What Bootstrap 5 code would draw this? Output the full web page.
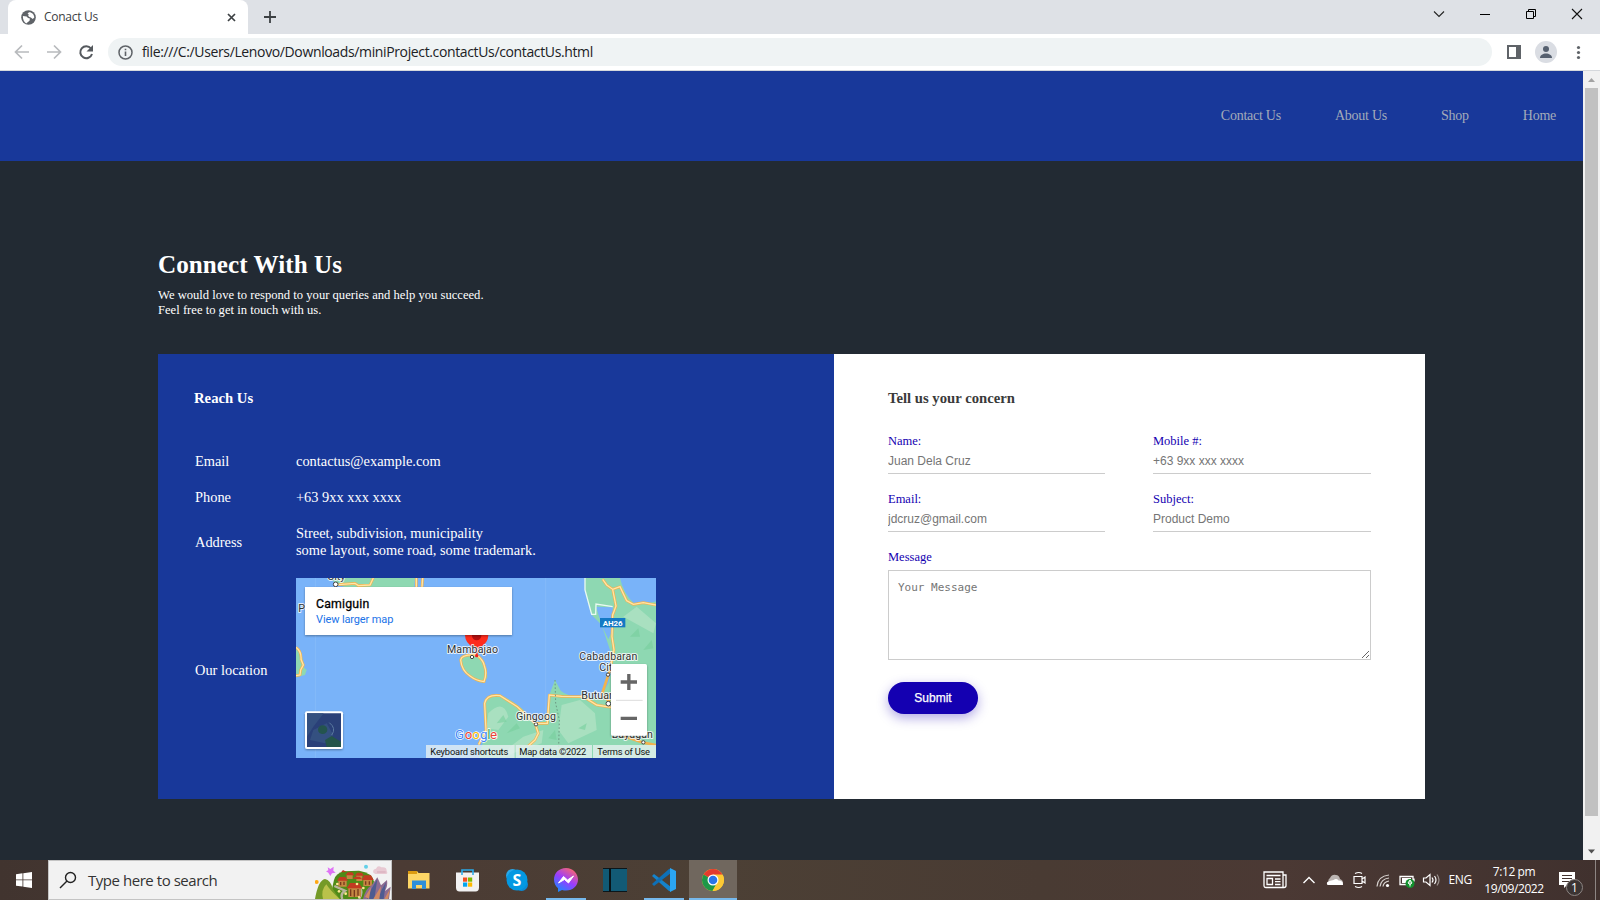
<!DOCTYPE html>
<html lang="en">
<head>
<meta charset="utf-8">
<title>Conact Us</title>
<link href="https://cdn.jsdelivr.net/npm/bootstrap@5.3.0/dist/css/bootstrap.min.css" rel="stylesheet">
<style>
body{width:1600px;height:900px;overflow:hidden;font-family:"Open Sans","Noto Sans",sans-serif;background:#222a33}
svg{display:block;flex:none}
.tabstrip{height:34px;background:#dee1e6}
.tab-active{width:240px;height:34px;margin-left:8px;background:#fff;border-radius:8px 8px 0 0;padding:0 12px 0 13px;font-size:12px;color:#3c4043}
.tab-title{letter-spacing:-.28px}
.newtab{margin:11px 0 0 16px}
.winctl{width:46px;height:28px}
.toolbar{height:37px;background:#fff;border-bottom:1px solid #d5d8dc;color:#202124}
.omnibox{width:1384px;height:28px;border-radius:14px;background:#eff3f4;padding-left:10px;font-size:14px}
.url-text{letter-spacing:-.365px;margin:0 0 1px 9px}
.viewport{height:789px}
.site{font-family:"Liberation Serif",serif;background:#222a33;width:1583px}
.site-nav{height:90px;background:#18389a;padding:0 27px 2px 0;gap:54px;font-size:14px;letter-spacing:-.25px}
.site-nav a{color:#a3abb9;text-decoration:none}
.site-main{padding:86px 158px 0}
.site h1{font-size:25.1px;line-height:30px;font-weight:700;color:#fff;margin:3px 0 0;letter-spacing:.06px}
.intro{font-size:12.6px;line-height:15px;color:#fff;margin:8px 0 36px;letter-spacing:.01px}
.panels{height:445px;width:1267px}
.reach{width:676px;background:#18389a;color:#fff;padding:34px 36px}
.concern{background:#fff;flex:1;padding:34px 54px}
.site h2{font-size:14.7px;line-height:20px;font-weight:700;margin:0}
.concern h2{color:#3a3a3a}
.facts{display:grid;grid-template-columns:101px 360px;font-size:14.4px;line-height:17px;row-gap:19px;align-items:center;margin:45px 0 0 1px}
.mapbox{width:360px;height:180px}
.fieldgrid{display:grid;grid-template-columns:217px 218px;column-gap:48px;row-gap:18px;margin-top:26px}
.concern label{display:block;font-size:12.5px;line-height:15px;color:#1400b1;margin-bottom:4px}
.concern label.msg-label{margin:18px 0 5px}
.concern input{display:block;width:100%;height:21px;border:0;border-bottom:1px solid #ccc;padding:0 0 5px;font:12px/15px "Liberation Sans",sans-serif;border-radius:0}
.concern ::placeholder{color:#757575;opacity:1}
.concern textarea{display:block;width:483px;height:90px;border:1px solid #ccc;padding:10px 9px;font:11px/13px "DejaVu Sans Mono",monospace;resize:both}
.send{width:90px;height:32px;border-radius:16px;background:#1400b1;color:#fff;border:0;font:12px "Liberation Sans",sans-serif;-webkit-text-stroke:.25px #fff;box-shadow:0 4px 12px rgba(60,40,190,.4);margin-top:22px}
.scrollrail{width:17px;background:#f1f1f1}
.thumb{width:13px;height:728px;background:#c1c1c1}
.taskbar{height:40px;background:linear-gradient(90deg,#41342f 0,#4b3b34 25%,#4c4035 45%,#493b33 65%,#4b3934 80%,#40312e 100%);color:#fff}
.startbtn{width:48px;height:40px}
.searchbox{width:344px;height:40px;background:#f2f2f2;border:1px solid #c4c4c4;padding-left:10px;color:#333;font-size:15px;margin-right:3px}
.search-text{letter-spacing:-.46px;margin-left:11px}
.app{width:48px;height:40px;margin-right:1px;padding-top:2px;border-bottom:2px solid transparent}
.app-run{width:40px;margin:0 5px 0 4px;border-color:#76b9ed}
.app-front{background:#70675e;border-color:#76b9ed}
.trayicon{width:24px;height:24px}
.lang{font-size:12px;letter-spacing:-.3px;margin-left:6px;width:21px;white-space:nowrap}
.clock{width:90px;margin-left:-.5px;font-size:12px;line-height:17.5px;letter-spacing:-.42px}
</style>
</head>
<body>
<div class="tabstrip d-flex align-items-start">
  <div class="tab-active d-flex align-items-center">
    <svg width="15" height="15" viewBox="0 0 16 16"><circle cx="8" cy="8" r="7.8" fill="#5f6368"/><path d="M2 6.500l4 .5 1.500 1.500 2 .6-.4 2.400-2 1.500-1.600 1.500C3.600 13 1.800 10.500 2 6.500M8.500 2.500C12 2.500 14 5 14.200 8l-1.700 1.500-2-1.500L9 7.500 7.500 6 8.500 5 7 4z" fill="#fff"/></svg>
    <span class="tab-title ms-2">Conact Us</span>
    <svg class="ms-auto" width="9" height="9" viewBox="0 0 9 9"><path d="M1 1l7 7M8 1L1 8" stroke="#3c4043" stroke-width="1.7"/></svg>
  </div>
  <svg class="newtab" width="12" height="12" viewBox="0 0 12 12"><path d="M6 0v12M0 6h12" stroke="#3c4043" stroke-width="1.8"/></svg>
  <div class="d-flex ms-auto">
    <svg class="winctl" viewBox="0 0 46 28"><path d="M18 11.500l5 5 5-5" fill="none" stroke="#222" stroke-width="1.1"/></svg>
    <svg class="winctl" viewBox="0 0 46 28"><path d="M18 14.500h10" stroke="#000"/></svg>
    <svg class="winctl" viewBox="0 0 46 28"><path d="M18.500 11.500h7v7h-7zM20.500 11v-1.500h7v7H26" fill="none" stroke="#000"/></svg>
    <svg class="winctl" viewBox="0 0 46 28"><path d="M18 9l10 10M28 9L18 19" stroke="#111" stroke-width="1.1"/></svg>
  </div>
</div>
<div class="toolbar d-flex align-items-center">
  <svg width="108" height="36" viewBox="0 0 108 36" fill="none" stroke-width="1.700"><path d="M29 18H16M22 11.500L15.500 18l6.500 6.500M47 18h13M54 11.500l6.500 6.500-6.500 6.500" stroke="#b8babd"/><path d="M91 14.500a6 6 0 1 0 1 5.500" stroke="#55595e" stroke-width="2"/><path d="M93 11v6.500h-6.500z" fill="#55595e"/></svg>
  <div class="omnibox d-flex align-items-center">
    <svg width="15" height="15" viewBox="0 0 15 15"><circle cx="7.500" cy="7.500" r="6.500" fill="none" stroke="#5f6368" stroke-width="1.500"/><path d="M7.500 6.500V11M7.500 3.700v1.600" stroke="#5f6368" stroke-width="1.600"/></svg>
    <span class="url-text">file:///C:/Users/Lenovo/Downloads/miniProject.contactUs/contactUs.html</span>
  </div>
  <svg width="108" height="36" viewBox="0 0 108 36"><path d="M15 11h14v14H15zM17 13v10h7V13z" fill="#5f6368" fill-rule="evenodd"/><circle cx="54" cy="18" r="11" fill="#dadde3"/><circle cx="54" cy="15" r="3" fill="#56606f"/><path d="M48 24c0-6 12-6 12 0z" fill="#56606f"/><g fill="#5f6368"><circle cx="86.500" cy="13.500" r="1.600"/><circle cx="86.500" cy="18.500" r="1.600"/><circle cx="86.500" cy="23.500" r="1.600"/></g></svg>
</div>

<div class="viewport d-flex">
  <div class="site">
    <nav class="site-nav d-flex align-items-center justify-content-end"><a href="#">Contact Us</a><a href="#">About Us</a><a href="#">Shop</a><a href="#">Home</a></nav>
    <main class="site-main">
      <h1>Connect With Us</h1>
      <p class="intro">We would love to respond to your queries and help you succeed.<br>Feel free to get in touch with us.</p>
      <div class="panels d-flex">
        <section class="reach">
          <h2>Reach Us</h2>
          <div class="facts">
            <div>Email</div><div>contactus@example.com</div>
            <div>Phone</div><div>+63 9xx xxx xxxx</div>
            <div>Address</div><div>Street, subdivision, municipality<br>some layout, some road, some trademark.</div>
            <div class="pt-1">Our location</div>
            <div class="mapbox">
              <svg width="360" height="180" viewBox="18 24 1080 540" font-family="Roboto,sans-serif">
                <defs><filter id="ds" x="-10%" y="-20%" width="120%" height="150%"><feDropShadow dx="0" dy="3" stdDeviation="3" flood-opacity=".35"/></filter></defs>
                <path d="M18 24h1080v540H18z" fill="#79b3f9"/>
                <path d="M76 24v540M767 24v540" stroke="#8bbdf9" stroke-width="2"/>
                <g fill="#8ed8b2">
                  <path d="M120 24H375L372 52H205Q150 60 120 24zM18 230Q40 250 40 290L50 300 45 315 18 322z"/>
                  <path d="M512 270Q520 252 560 255 592 280 592 320 585 342 565 336 520 310 512 270z"/>
                  <path d="M885 24H1098V564H566L588 480 582 400Q590 370 630 375 680 395 720 440 745 470 772 440L778 375 795 330 812 362Q830 378 870 380L930 384 955 340 965 300 960 240 950 210 935 165 905 135 885 60z"/>
                </g>
                <path d="M918 110L968 112 972 170 955 208 935 165zM990 24h108v70Q1065 105 1030 98 1000 70 990 24z" fill="#79b3f9"/>
                <g fill="#a9e0c0"><path d="M595 430Q640 385 655 440L625 480 590 475zM815 405L870 390 915 430 920 480 835 520 805 480zM1000 140L1040 110 1098 160 1090 190zM700 500L760 480 755 520 640 560 660 530z"/></g>
                <g fill="#76ce9d" opacity=".6"><path d="M620 460L640 435 650 455zM650 490L680 460 690 475zM1020 200L1045 175 1050 200zM1060 240L1085 210 1090 235zM865 475L890 460 885 480zM775 505L795 480 800 510z"/></g>
                <g fill="none" stroke="#f2b24d" stroke-width="8" stroke-linejoin="round">
                  <path d="M145 44L195 40 205 47 240 45 250 24M379 24V52M398 24L396 52M18 232Q35 245 33 268L40 285 32 300 30 315 18 317M566 524L588 480 584 400Q590 372 630 377L682 410 735 460H772L778 375 815 379 880 380 920 405 965 412M735 460L745 490 735 510 715 528M938 28L950 45 968 58 978 108 968 135 966 200 972 240 960 300 935 375 960 395M968 58L990 50 1010 92 1030 103 1060 98 1098 105M512 270Q514 252 560 255 580 270 583 287 592 310 582 335 558 332 540 318 515 302 512 270zM1000 498L1060 518 1098 525"/></g>
                <path d="M145 44L195 40 205 47 240 45 250 24M379 24V52M398 24L396 52M18 232Q35 245 33 268L40 285 32 300 30 315 18 317M566 524L588 480 584 400Q590 372 630 377L682 410 735 460H772L778 375 815 379 880 380 920 405 965 412M735 460L745 490 735 510 715 528M938 28L950 45 968 58 978 108 968 135 966 200 972 240 960 300M968 58L990 50 1010 92 1030 103 1060 98 1098 105M512 270Q514 252 560 255 580 270 583 287 592 310 582 335 558 332 540 318 515 302 512 270z" fill="none" stroke="#ffe5a6" stroke-width="4"/>
                <path d="M885 24V60L905 133 917 133 918 102 968 110" fill="none" stroke="#e9faf1" stroke-width="4"/>
                <path d="M795 330L797 400 808 450 806 530" fill="none" stroke="#6c9a83" stroke-width="3" stroke-dasharray="5 6"/>
                <path d="M930 144h76v28h-76z" fill="#1479c4"/><text x="938" y="167" font-size="24" font-weight="700" fill="#fff" textLength="60" lengthAdjust="spacingAndGlyphs">AH26</text>
                <path d="M560 262L553 234Q525 220 525 195 525 165 560 165 595 165 595 195 595 220 567 234z" fill="#fe2b1c"/><circle cx="560" cy="197" r="14" fill="#b40f0f"/><circle cx="560" cy="257" r="5" fill="#e22"/>
                <g fill="#fff" stroke="#444" stroke-width="3"><circle cx="137" cy="43" r="7"/><circle cx="546" cy="261" r="5"/><circle cx="738" cy="463" r="5"/><circle cx="954" cy="314" r="5"/><circle cx="955" cy="401" r="7"/><circle cx="1060" cy="517" r="5"/></g>
                <g font-size="32" fill="#333" stroke="#fff" stroke-width="6" stroke-opacity=".8" paint-order="stroke" stroke-linejoin="round">
                  <text x="112" y="31">City</text><text x="25" y="126">P</text>
                  <text x="471" y="248" textLength="153">Mambajao</text><text x="868" y="269" textLength="174">Cabadbaran</text><text x="928" y="302">City</text><text x="874" y="386">Butuan</text><text x="678" y="449" textLength="120">Gingoog</text><text x="965" y="504" textLength="124">Bayugan</text>
                </g>
                <path d="M45 51h621v144H45z" fill="#fff" filter="url(#ds)"/>
                <text x="78" y="114" font-size="37" fill="#000" stroke="#000" stroke-width=".8" textLength="160">Camiguin</text>
                <text x="78" y="159" font-size="33" fill="#1a73e8" textLength="232">View larger map</text>
                <rect x="963" y="282" width="108" height="215" rx="5" fill="#fff" filter="url(#ds)"/><path d="M978 391h80" stroke="#ddd" stroke-width="3"/><path d="M992 336h49M1016.500 312v48M992 445h49" stroke="#666" stroke-width="10"/>
                <rect x="45" y="424" width="114" height="113" rx="6" fill="#fff" filter="url(#ds)"/><path d="M51 430h102v101H51z" fill="#2a4078"/><path d="M51 430h50L70 470 51 500zM110 460l20 35-25 25-45-10 10-30z" fill="#345080"/><ellipse cx="98" cy="479" rx="14" ry="13" fill="#24544e"/><path d="M105 510L125 498 153 515v16H110z" fill="#24554a"/><path d="M118 458Q140 475 125 495" fill="none" stroke="#5b7a9f" stroke-width="3"/>
                <text y="507" font-size="40" stroke="#fff" stroke-width="4" paint-order="stroke"><tspan x="495" fill="#4285f4">G</tspan><tspan x="524" fill="#ea4335">o</tspan><tspan x="547" fill="#fbbc05">o</tspan><tspan x="570" fill="#4285f4">g</tspan><tspan x="592" fill="#34a853">l</tspan><tspan x="600" fill="#ea4335">e</tspan></text>
                <path d="M408 525h266v39H408zM677 525h229v39H677zM909 525h189v39H909z" fill="#e8f1f2" opacity=".78"/>
                <g font-size="28" fill="#111"><text x="421" y="555" textLength="234">Keyboard shortcuts</text><text x="688" y="555" textLength="201">Map data ©2022</text><text x="922" y="555" textLength="158">Terms of Use</text></g>
              </svg>
            </div>
          </div>
        </section>
        <section class="concern">
          <h2>Tell us your concern</h2>
          <div class="fieldgrid">
            <div><label>Name:</label><input placeholder="Juan Dela Cruz"></div>
            <div><label>Mobile #:</label><input placeholder="+63 9xx xxx xxxx"></div>
            <div><label>Email:</label><input placeholder="jdcruz@gmail.com"></div>
            <div><label>Subject:</label><input placeholder="Product Demo"></div>
          </div>
          <label class="msg-label">Message</label>
          <textarea placeholder="Your Message"></textarea>
          <button class="send">Submit</button>
        </section>
      </div>
    </main>
  </div>
  <div class="scrollrail d-flex flex-column align-items-center justify-content-between">
    <svg width="17" height="17" viewBox="0 0 17 17"><path d="M5 11l3.500-4 3.500 4z" fill="#a3a3a3"/></svg>
    <div class="thumb"></div>
    <svg class="mt-auto" width="17" height="17" viewBox="0 0 17 17"><path d="M5 6.500h7l-3.500 4z" fill="#505050"/></svg>
  </div>
</div>

<footer class="taskbar d-flex align-items-center">
  <div class="startbtn d-flex align-items-center justify-content-center"><svg width="16" height="16" viewBox="0 0 16 16" fill="#fff"><path d="M0 2.200L6.500 1.300v6.200H0zM7.300 1.200L16 0v7.500H7.300zM0 8.300h6.500v6.200L0 13.700zM7.300 8.300H16V16l-8.700-1.200z"/></svg></div>
  <div class="searchbox d-flex align-items-center">
    <svg width="18" height="18" viewBox="0 0 18 18"><circle cx="11.500" cy="6.500" r="5" fill="none" stroke="#222" stroke-width="1.400"/><path d="M8 10L1 17" stroke="#222" stroke-width="1.400"/></svg>
    <span class="search-text">Type here to search</span>
    <svg class="ms-auto" width="76" height="38" viewBox="18 3 228 114">
      <path d="M193 38q-3-10 8-12 6-12 16-4 16-2 16 10 6 10-6 10h-28z" fill="#e8c9d2"/><path d="M204 36h26" stroke="#d9b0bd" stroke-width="4"/>
      <path d="M56 22l8 5 10-7-1 12 7 6-11 2-5 8-6-10-7-4 7-3z" fill="#df72f5"/><circle cx="171" cy="20" r="6" fill="#62d0e8"/><circle cx="23" cy="66" r="6" fill="#ffa914"/>
      <path d="M62 117L75 60Q80 40 105 34L150 32Q190 38 195 65L185 117z" fill="#4f8b17"/>
      <path d="M18 117Q28 60 48 57 65 60 72 88L92 117z" fill="#759a27"/><path d="M42 117Q35 90 52 73 62 90 92 117z" fill="#bac24b"/>
      <path d="M100 117q-7-16 8-25l-32-14M150 117q16-25-4-40" stroke="#b9b39c" stroke-width="7" fill="none"/>
      <g fill="#c58742"><path d="M88 60h25v20H88zM113 42h18v15h-18zM142 45h18v18h-18zM163 58h26v20h-26zM118 80h38v31h-38z"/></g>
      <g fill="#c33b21"><path d="M84 62l8-11h17l8 11zM96 37l6-7 11 6zM109 46l7-9h14l6 9zM138 47l6-9h15l6 9zM158 60l8-14h20l8 14zM113 85l10-16h27l10 16zM132 57l5-7h15l7 7z"/></g>
      <path d="M125 88v20M136 90v20M147 87v20M95 66v10M105 65v10M170 64v10M181 64v10" stroke="#78391c" stroke-width="4"/>
      <g fill="#ffe891"><circle cx="85" cy="72" r="4"/><circle cx="90" cy="94" r="4"/><circle cx="144" cy="72" r="4"/><circle cx="110" cy="101" r="4"/><circle cx="163" cy="84" r="4"/><circle cx="150" cy="111" r="3"/></g>
      <path d="M162 117Q170 85 188 76L205 52 216 76 234 60Q237 78 228 93L245 80 240 117z" fill="#8d6c91"/><path d="M174 117Q185 86 205 57L196 117zM208 117Q215 90 231 66L224 117z" fill="#4e5c91"/><path d="M193 117l23-38-5 38zM226 117l17-30-6 30zM168 110l18-28-6 35z" fill="#d28a62"/>
    </svg>
  </div>
  <div class="app d-flex align-items-center justify-content-center"><svg width="24" height="24" viewBox="0 0 24 24"><path d="M1 3h9l1.500 2h11v15.500H1z" fill="#fdd666"/><path d="M1 3h9v3H1z" fill="#dc9b10"/><path d="M5 12.500h14v8.500h-4v-4H9v4H5z" fill="#2e8fd9"/></svg></div>
  <div class="app d-flex align-items-center justify-content-center"><svg width="24" height="24" viewBox="0 0 24 24"><path d="M6 7V2h11v5" fill="none" stroke="#2aa9e8" stroke-width="1.700"/><path d="M0 4.500h23v15q0 4-3.500 4h-16Q0 23.500 0 19.500z" fill="#f2f2f2"/><path d="M6 4v3M17 4v3" stroke="#2aa9e8" stroke-width="1.500"/><path d="M7 9.500h4.200v4.200H7z" fill="#f25022"/><path d="M12 9.500h4.200v4.200H12z" fill="#7fba00"/><path d="M7 14.500h4.200v4.200H7z" fill="#00a4ef"/><path d="M12 14.500h4.200v4.200H12z" fill="#ffb900"/></svg></div>
  <div class="app d-flex align-items-center justify-content-center"><svg width="24" height="24" viewBox="0 0 24 24"><circle cx="7.500" cy="7.500" r="6.500" fill="#28a8ea"/><circle cx="16.500" cy="16.500" r="6.500" fill="#0a8ad6"/><circle cx="12" cy="12" r="10.500" fill="#0398e2"/><text x="12" y="17.500" text-anchor="middle" font-size="16" font-weight="700" fill="#fff">S</text></svg></div>
  <div class="app app-run d-flex align-items-center justify-content-center"><svg width="24" height="24" viewBox="0 0 24 24"><defs><linearGradient id="ms" x1=".2" y1="1" x2=".8" y2="0"><stop stop-color="#168bff"/><stop offset=".5" stop-color="#9a3cff"/><stop offset="1" stop-color="#ff6968"/></linearGradient></defs><path d="M12 0C5 0 0 5 0 11.600c0 3.600 1.500 6.600 4 8.700V24l4-2q2 .6 4 .6c7 0 12-4.800 12-11S19 0 12 0z" fill="url(#ms)"/><path d="M4.500 15L9.500 8.500l4 3.500 6-4-5 7-4-3.500z" fill="#fff" stroke="#fff" stroke-linejoin="round"/></svg></div>
  <div class="app d-flex align-items-center justify-content-center"><svg width="24" height="24" viewBox="0 0 24 24"><path d="M0 0h24v24H0z" fill="#125a75"/><path d="M0 .5h24M0 23.500h24" stroke="#0b161b"/><path d="M6 0h2v24H6z" fill="#091317"/></svg></div>
  <div class="app app-run d-flex align-items-center justify-content-center"><svg width="24" height="24" viewBox="0 0 24 24"><path d="M0 8l2-2L19 19v4.500L17 23z" fill="#1583cc"/><path d="M0 16l2 2L19 5V.5L17 1z" fill="#0d70b8"/><path d="M18 0l6 3v18l-6 3z" fill="#2ba5f2"/></svg></div>
  <div class="app app-front d-flex align-items-center justify-content-center"><svg width="22" height="22" viewBox="0 0 22 22"><circle cx="11" cy="11" r="11" fill="#fcc934"/><path d="M11 11L1.500 5.500A11 11 0 0 1 20.500 5.500H11z" fill="#e33b2e"/><path d="M11 11L1.500 5.500A11 11 0 0 0 10.500 22L15.300 13.500z" fill="#1e9748"/><path d="M11 6h9.800a11 11 0 0 1-10.300 16L15.300 13.500z" fill="#fcc934"/><circle cx="11" cy="11" r="5.500" fill="#fff"/><circle cx="11" cy="11" r="4.300" fill="#2b75e8"/></svg></div>

  <div class="ms-auto d-flex align-items-center">
    <svg width="24" height="18" viewBox="0 0 24 18" fill="none" stroke="#fff" stroke-width="1.300"><path d="M1 1h19v15.500H3q-2 0-2-2zM20 4h3v10.500q0 2-2 2h-2M3.500 4.500h14M4 7.500h5.500v6H4zM12 8h5.500M12 10.700h5.500M12 13.500h5.500"/></svg>
    <svg class="trayicon ms-2 ps-0" viewBox="-2 0 24 24"><path d="M6.500 15L12 9.500l5.500 5.500" fill="none" stroke="#fff" stroke-width="1.400"/></svg>
    <svg class="trayicon ms-1" viewBox="0 0 24 24"><path d="M7 16a3.500 3.500 0 0 1 0-6q2-4 6-3 3 0 4 4 3 1 3 4z" fill="#bbb5b2"/><path d="M4.500 17q-2-3 2-4l4-1q3-2 5 .5 5 0 4.500 4.500z" fill="#fff"/></svg>
    <svg class="trayicon" viewBox="0 0 24 24"><path d="M7 8.500h8v7H7zM15 11l3-2v6l-3-2M8 5.500q4-2 7 0M8 18.500q4 2 7 0" fill="none" stroke="#fff" stroke-width="1.200"/></svg>
    <svg class="trayicon" viewBox="0 0 24 24"><path d="M6 18.500Q7 8 18 7M9 18.500q1-7.500 9-8.500M12 18.500q.5-4.500 6-5.500" fill="none" stroke="#d8d3d0" stroke-width="1.200"/><circle cx="16.500" cy="17.500" r="1.600" fill="#fff"/></svg>
    <svg class="trayicon" viewBox="0 0 24 24"><path d="M5 8.500h13v8H5zM19 10.500v3" fill="none" stroke="#fff" stroke-width="1.300"/><path d="M7 10h9v5H7z" fill="#fff"/><circle cx="15" cy="15.500" r="4.500" fill="#12902d"/><path d="M15 13v5.500M13 15q2 3 4 0l-2-3z" stroke="#fff" fill="none"/></svg>
    <svg class="trayicon" viewBox="0 0 24 24"><path d="M4.500 10h2.500l4-3.500v11L7 14H4.500zM13 9.500q2 2.500 0 5M15.500 8q3 4 0 8" fill="none" stroke="#fff" stroke-width="1.200"/><path d="M18 6.500q4 5.500 0 11" fill="none" stroke="#998f8b" stroke-width="1.200"/></svg>
    <span class="lang">ENG</span>
    <div class="clock text-center">7:12 pm<br>19/09/2022</div>
    <svg width="41" height="40" viewBox="0 0 41 40"><path d="M0 12h16v13H8l-3 3v-3H0z" fill="#fff"/><path d="M3 15.500h10M3 18.500h10M3 21.500h7" stroke="#43332f"/><circle cx="15.500" cy="27.500" r="8" fill="#3b3433" stroke="#8d8583"/><text x="15.500" y="32" font-size="12" text-anchor="middle" fill="#fff">1</text><path d="M36.500 0v40" stroke="#8d8583"/></svg>
  </div>
</footer>
<script src="https://cdn.jsdelivr.net/npm/bootstrap@5.3.0/dist/js/bootstrap.bundle.min.js"></script>
</body>
</html>
